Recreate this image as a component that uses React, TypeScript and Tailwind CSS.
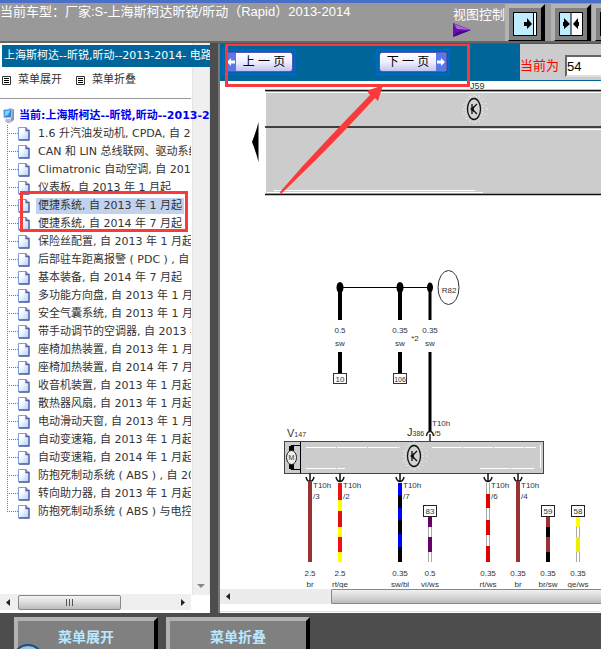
import React from 'react';

const documents = [
  '1.6 升汽油发动机, CPDA, 自 2013 年 1 月起',
  'CAN 和 LIN 总线联网、驱动系统, 自 2013 年 1 月起',
  'Climatronic 自动空调, 自 2013 年 1 月起',
  '仪表板, 自 2013 年 1 月起',
  '便捷系统, 自 2013 年 1 月起',
  '便捷系统, 自 2014 年 7 月起',
  '保险丝配置, 自 2013 年 1 月起',
  '后部驻车距离报警 ( PDC ) , 自 2013 年 1 月起',
  '基本装备, 自 2014 年 7 月起',
  '多功能方向盘, 自 2013 年 1 月起',
  '安全气囊系统, 自 2013 年 1 月起',
  '带手动调节的空调器, 自 2013 年 1 月起',
  '座椅加热装置, 自 2013 年 1 月起',
  '座椅加热装置, 自 2014 年 7 月起',
  '收音机装置, 自 2013 年 1 月起',
  '散热器风扇, 自 2013 年 1 月起',
  '电动滑动天窗, 自 2013 年 1 月起',
  '自动变速箱, 自 2013 年 1 月起',
  '自动变速箱, 自 2014 年 1 月起',
  '防抱死制动系统 ( ABS ) , 自 2013 年 1 月起',
  '转向助力器, 自 2013 年 1 月起',
  '防抱死制动系统 ( ABS ) 与电控稳定程序',
];

const selectedIndex = 4;

type Segment = [color: string, from: number, to: number];

const wires: { x: number; gauge: string; code: string; pin?: string; box?: string; segments: Segment[] }[] = [
  { x: 310, gauge: '2.5', code: 'br', pin: '/3', segments: [['#993333', 481, 562]] },
  {
    x: 340, gauge: '2.5', code: 'rt/ge', pin: '/2',
    segments: [['#ee1111', 483, 500], ['#ffff00', 500, 511], ['#dd1111', 511, 527], ['#ffff00', 527, 537], ['#ee1111', 537, 552], ['#ffff00', 552, 562]],
  },
  {
    x: 400, gauge: '0.35', code: 'sw/bl', pin: '/7',
    segments: [['#0000ff', 483, 495], ['#000000', 495, 508], ['#0000ff', 508, 520], ['#000000', 520, 534], ['#0000ff', 534, 547], ['#000000', 547, 562]],
  },
  {
    x: 430, gauge: '0.5', code: 'vi/ws', box: '83',
    segments: [['#660066', 516, 527], ['#ffffff', 527, 537], ['#660066', 537, 552], ['#ffffff', 552, 562]],
  },
  {
    x: 488, gauge: '0.35', code: 'rt/ws', pin: '/6',
    segments: [['#ffffff', 483, 494], ['#dd0000', 494, 508], ['#ffffff', 508, 520], ['#dd0000', 520, 535], ['#ffffff', 535, 546], ['#dd0000', 546, 562]],
  },
  { x: 518, gauge: '0.35', code: 'br', pin: '/4', segments: [['#993333', 481, 562]] },
  {
    x: 548, gauge: '0.35', code: 'br/sw', box: '59',
    segments: [['#993333', 516, 527], ['#000000', 527, 537], ['#993333', 537, 552], ['#000000', 552, 562]],
  },
  {
    x: 578, gauge: '0.35', code: 'ge/ws', box: '58',
    segments: [['#ffff00', 516, 527], ['#ffffff', 527, 537], ['#eeee00', 537, 552], ['#ffffff', 552, 562]],
  },
];

export default function App() {
  return (
    <div className="flex h-screen flex-col overflow-hidden bg-[#4d4d4d] font-['DejaVu_Sans','Noto_Sans_CJK_SC',sans-serif] text-[11px] text-[#333]">
      <Header />
      <main className="flex min-h-0 flex-1">
        <Sidebar />
        <Viewer />
      </main>
      <Footer />
    </div>
  );
}

function Header() {
  return (
    <header className="flex h-[43px] shrink-0 justify-between border-t-[3px] border-b-2 border-t-[#4a6fc8] border-b-[#666] bg-[#999] font-['Liberation_Sans','Noto_Sans_CJK_SC',sans-serif] text-[13px] leading-4 text-white">
      <h1 className="pt-px whitespace-nowrap">当前车型：厂家:S-上海斯柯达昕锐/昕动（Rapid）2013-2014</h1>
      <div className="flex w-[148px] shrink-0 overflow-hidden">
        <div className="w-[52px] shrink-0 pt-1 whitespace-nowrap">
          视图控制
          <svg width="18" height="15" viewBox="0 0 18 15" aria-hidden="true">
            <path d="M0 0L18 7L0 14Z" fill="#6a0dad" />
            <path d="M1 1L17 7L4 6Z" fill="#a56ad8" />
            <path d="M0 14L18 7L4 9Z" fill="#4b0082" />
          </svg>
        </div>
        <div className="flex shrink-0 items-start gap-px pt-px">
          <div className="flex gap-[6px]">
            <ViewButton label="单窗口">
              <rect x="1" y="1" width="19" height="22" fill="#c0ecff" />
              <rect x="20" y="1" width="3" height="22" fill="#fff" />
              <path d="M20.500 1V23M0.500 0.500H23.500V23.500H0.500Z" fill="none" stroke="#000" />
              <path d="M11 10H14V6L19 12L14 17V14H11Z" />
            </ViewButton>
            <ViewButton label="双窗口">
              <rect x="1" y="1" width="11" height="22" fill="#c0ecff" />
              <rect x="12" y="1" width="11" height="22" fill="#fff" />
              <path d="M12 1V23M0.500 0.500H23.500V23.500H0.500Z" fill="none" stroke="#000" />
              <path d="M4 10H5V6L11 12L5 17V14H4ZM20 10H19V6L14 12L19 17V14H20Z" />
            </ViewButton>
          </div>
          <ViewButton label="全屏">
            <rect width="24" height="24" fill="#000" />
          </ViewButton>
        </div>
      </div>
    </header>
  );
}

function ViewButton({ label, children }: { label: string; children: React.ReactNode }) {
  return (
    <button
      type="button"
      aria-label={label}
      className="size-10 shrink-0 border-4 border-t-[#b3b3b3] border-r-black border-b-black border-l-[#b3b3b3] bg-[#808080] p-1"
    >
      <svg className="block" width="24" height="24" viewBox="0 0 24 24">
        {children}
      </svg>
    </button>
  );
}

function Sidebar() {
  return (
    <aside className="grid w-[210px] shrink-0 grid-rows-[minmax(0,1fr)] bg-white">
      <div className="col-start-1 row-start-1 mb-[18px] ml-auto flex w-[18px] flex-col justify-end border-x border-[#e3e3e3] bg-[#efefef]">
        <svg className="mx-auto mb-[6px]" width="8" height="5" viewBox="0 0 8 5" aria-hidden="true">
          <path d="M0 0H8L4 4Z" fill="#888" />
        </svg>
      </div>
      <div className="col-start-1 row-start-1 flex min-w-0 flex-col overflow-hidden pt-[2px]">
        <h2 className="ml-[2px] h-[22px] shrink-0 overflow-hidden bg-[#006699] pl-[2px] leading-[22px] whitespace-nowrap text-white">
          上海斯柯达--昕锐,昕动--2013-2014- 电路图
        </h2>
        <div className="mr-[19px] flex h-8 shrink-0 items-start gap-[14px] border-b border-[#999] pt-1 pl-[2px]">
          <MenuButton text="菜单展开" />
          <MenuButton text="菜单折叠" />
        </div>
        <a href="#root-node" className="mt-2 flex h-[18px] shrink-0 items-center gap-1 pl-[3px] font-bold whitespace-nowrap text-[#0000ee]">
          <ComputerIcon />
          当前:上海斯柯达--昕锐,昕动--2013-2014
        </a>
        <div className="relative mr-[19px] flex-1">
          <ul className="overflow-hidden">
            {documents.map((title, i) => (
              <li key={title} className="flex h-[18px] items-center pl-[7px]">
                <TreeLine last={i === documents.length - 1} />
                <PageIcon />
                <a
                  href={`#doc-${i}`}
                  className={`ml-[6px] shrink-0 px-[2px] leading-4 whitespace-nowrap ${i === selectedIndex ? 'bg-[#c1d2ee]' : ''}`}
                >
                  {title}
                </a>
              </li>
            ))}
          </ul>
          <div className="pointer-events-none absolute top-[66px] left-5 h-[41px] w-[168px] border-[3px] border-[#fa3a3a]" />
        </div>
        <div className="mr-[19px] mb-[3px] flex h-4 shrink-0 items-center bg-[#efefef] pr-[6px] pl-[6px]">
          <Arrow direction="left" />
          <div className="ml-2 flex h-[15px] w-[103px] items-center justify-center gap-[2px] rounded-[2px] border border-[#888] bg-linear-to-b from-[#f4f4f4] via-[#dcdcdc] to-[#bcbcbc]">
            <i className="h-[7px] w-px bg-[#555]" />
            <i className="h-[7px] w-px bg-[#555]" />
            <i className="h-[7px] w-px bg-[#555]" />
          </div>
          <span className="ml-auto">
            <Arrow direction="right" />
          </span>
        </div>
      </div>
    </aside>
  );
}

function MenuButton({ text }: { text: string }) {
  return (
    <button type="button" className="flex items-center gap-[7px] leading-[18px]">
      <svg width="9" height="9" viewBox="0 0 9 9">
        <path d="M0.500 0.500H8.500V8.500H0.500Z" fill="#fff" stroke="#333" />
        <path d="M2 2.500H7M2 4.500H7M2 6.500H7" stroke="#000" />
      </svg>
      {text}
    </button>
  );
}

function TreeLine({ last }: { last: boolean }) {
  return (
    <svg className="shrink-0" width="11" height="18" viewBox="0 0 11 18" aria-hidden="true">
      <path d={last ? 'M0.500 0V9' : 'M0.500 0V18'} stroke="#777" strokeDasharray="1 1" />
      <path d="M0 8.500H11" stroke="#777" strokeDasharray="1 1" />
    </svg>
  );
}

function PageIcon() {
  return (
    <svg className="shrink-0" width="12" height="14" viewBox="0 0 12 14" aria-hidden="true">
      <defs>
        <linearGradient id="page" x1="0" y1="0" x2="1" y2="1">
          <stop offset="0.3" stopColor="#fff" />
          <stop offset="1" stopColor="#a9cdf8" />
        </linearGradient>
      </defs>
      <path d="M0.500 0.500H8L11 3.500V13H0.500Z" fill="url(#page)" stroke="#7c9fd6" />
      <path d="M8 0.500V3.500H11V13H1" fill="none" stroke="#5560a0" strokeWidth="1.300" />
    </svg>
  );
}

function ComputerIcon() {
  return (
    <svg className="shrink-0" width="12" height="16" viewBox="0 0 12 16" aria-hidden="true">
      <path d="M7 2L11 1V12L8 14Z" fill="#8a93b5" />
      <path d="M0.500 2L9 0.500L8.500 9.500L1 10Z" fill="#2f86e0" stroke="#b8c8e4" />
      <path d="M2 3L7.500 2L5 7L2 8Z" fill="#7fd0ff" />
      <path d="M3 11H7L9 14L5 15.500L2 13Z" fill="#b4b8cc" />
    </svg>
  );
}

function Arrow({ direction }: { direction: 'left' | 'right' }) {
  return (
    <svg className="shrink-0" width="4" height="7" viewBox="0 0 4 7" aria-hidden="true">
      <path d={direction === 'left' ? 'M4 0V7L0 3.500Z' : 'M0 0V7L4 3.500Z'} fill="#222" />
    </svg>
  );
}

function Viewer() {
  return (
    <section className="relative ml-2 flex min-w-0 flex-1 flex-col border-t border-l-2 border-t-[#555] border-l-[#777] bg-white">
      <div className="flex h-[37px] shrink-0 justify-between bg-[#006699]">
        <nav className="flex items-start gap-[80px] pt-[5px] pl-[2px]">
          <PageLink text="上 一 页" direction="prev" />
          <PageLink text="下 一 页" direction="next" />
        </nav>
        <div className="flex h-9 w-[81px] shrink-0 items-center gap-[6px] overflow-hidden bg-[#ccc] pt-2 font-['Liberation_Sans','Noto_Sans_CJK_SC',sans-serif] text-[13px]">
          <label htmlFor="page" className="shrink-0 text-[#f00]">当前为</label>
          <input
            id="page"
            defaultValue="54"
            className="h-[22px] w-12 shrink-0 border-2 border-[#ddd] border-t-[#666] border-l-[#666] bg-white text-black"
          />
        </div>
      </div>
      <div className="min-h-0 flex-1 overflow-hidden">
        <Diagram />
      </div>
      <div className="mb-[7px] flex h-[15px] shrink-0 items-center overflow-hidden bg-[#ececec] pl-[6px]">
        <Arrow direction="left" />
        <div className="ml-[101px] h-[15px] flex-1 rounded-l-[2px] border border-r-0 border-[#888] bg-linear-to-b from-[#f0f0f0] via-[#d8d8d8] to-[#bdbdbd]" />
      </div>
      <div className="h-[2px] shrink-0 border-t border-[#ddd]" />
      {/* red callout over the page buttons */}
      <svg className="pointer-events-none absolute top-0 left-0" width="260" height="155" viewBox="220 43 260 155" aria-hidden="true">
        <rect x="226.500" y="43.500" width="242" height="41" fill="none" stroke="#fa3a3a" strokeWidth="3" />
        <path d="M383 84L378 100L375 97C346 129 312 163 281 193L280 191C309 157 340 125 370 94L367 90Z" fill="#fa3a3a" />
      </svg>
    </section>
  );
}

function PageLink({ text, direction }: { text: string; direction: 'prev' | 'next' }) {
  const badge = (
    <span className="flex w-[10px] items-center justify-center bg-[#5b78e8]">
      <svg width="8" height="8" viewBox="0 0 8 8" aria-hidden="true">
        <path d={direction === 'prev' ? 'M0 4L4 0V2.500H8V5.500H4V8Z' : 'M8 4L4 0V2.500H0V5.500H4V8Z'} fill="#fff" />
      </svg>
    </span>
  );
  return (
    <a href={`#${direction}`} className="block border-2 border-[#0066cc] p-px">
      <span className="flex h-5 w-[68px] overflow-hidden rounded-[3px] border border-[#5a5ab0] bg-linear-to-b from-white via-[#eeeeff] to-[#c4c4f4] font-['Liberation_Sans','Noto_Sans_CJK_SC',sans-serif] text-[12px] text-black">
        {direction === 'prev' && badge}
        <span className="flex-1 text-center leading-[18px] whitespace-nowrap">{text}</span>
        {direction === 'next' && badge}
      </span>
    </a>
  );
}

function Diagram() {
  return (
    <svg
      className="block font-['Liberation_Sans_Narrow','Liberation_Sans',sans-serif]"
      width="700"
      height="507"
      viewBox="220 81 700 507"
      fontSize="8"
      fill="#333"
    >
      {/* upper control unit */}
      <rect x="266" y="91" width="660" height="104" fill="#ccc" />
      <path d="M265 90.500H920M265 127H920M265 194.500H920" stroke="#111" strokeWidth="1.300" />
      <path d="M266 92.500H920M480 129.500H920M267 192.500H483M274 190.500H475" stroke="#fff" />
      <path d="M258.500 122Q256 132 252 142Q256 152 258.500 162Z" fill="#000" />
      <text x="470" y="89" fontSize="9">J59</text>
      <Speckle cx={474} cy={109} />
      <TransistorMark cx={474} cy={109} />

      {/* R82 branch */}
      <path d="M340 287.500H430" stroke="#000" />
      <path d="M340 287V320M340 352V373M400 287V320M400 352V373" stroke="#000" strokeWidth="4" />
      <path d="M430 287V320M430 352V431" stroke="#000" strokeWidth="3" />
      <ellipse cx="340" cy="287.500" rx="3.500" ry="5.500" fill="#000" />
      <ellipse cx="400" cy="287.500" rx="3.500" ry="5.500" fill="#000" />
      <ellipse cx="430" cy="287.500" rx="3" ry="5" fill="#000" />
      <ellipse cx="448.500" cy="287.500" rx="10.500" ry="17" fill="none" stroke="#333" />
      <g textAnchor="middle">
        <text x="449" y="293">R82</text>
        <text x="340" y="333">0.5</text>
        <text x="340" y="346">sw</text>
        <text x="400" y="333">0.35</text>
        <text x="400" y="346">sw</text>
        <text x="430" y="333">0.35</text>
        <text x="430" y="346">sw</text>
        <text x="415" y="341">*2</text>
        <rect x="333.500" y="373.500" width="13" height="10" fill="#fff" stroke="#333" />
        <text x="340" y="382">10</text>
        <rect x="393.500" y="373.500" width="13" height="10" fill="#fff" stroke="#333" />
        <text x="400" y="382" fontSize="7">106</text>
      </g>

      {/* J386 module */}
      <rect x="284.500" y="441.500" width="259" height="32" fill="#ccc" stroke="#444" />
      <path d="M306 447.500H400M432 447.500H536M540.500 445V468M306 468.500H345M480 468.500H534" stroke="#fff" strokeDasharray="30 1" />
      <path d="M300.500 442V473M291 445.500H300M291 469.500H300" stroke="#000" fill="none" />
      <rect x="289" y="446" width="5" height="5" fill="#000" />
      <rect x="289" y="464" width="5" height="5" fill="#000" />
      <ellipse cx="291.500" cy="457.500" rx="5" ry="7" fill="#eee" stroke="#222" />
      <text x="291.500" y="460" fontSize="7" textAnchor="middle">M</text>
      <Speckle cx={414} cy={456} />
      <TransistorMark cx={414} cy={456} />
      <text x="287" y="437"><tspan fontSize="11">V</tspan><tspan fontSize="7">147</tspan></text>
      <text x="407" y="436"><tspan fontSize="11">J</tspan><tspan fontSize="7">386</tspan></text>
      <text x="432" y="426">T10h</text>
      <text x="434" y="436">/5</text>
      <path d="M426.500 436Q427 431.500 430 431.500Q433 431.500 433.500 436M430 434V441" stroke="#222" strokeWidth="1.500" fill="none" />

      {wires.map((wire) => (
        <g key={wire.x}>
          {wire.pin && (
            <>
              <path
                d={`M${wire.x} 473V481M${wire.x - 4} 477Q${wire.x - 3} 481.500 ${wire.x} 481.500Q${wire.x + 3} 481.500 ${wire.x + 4} 477`}
                stroke="#111"
                strokeWidth="1.500"
                fill="none"
              />
              <text x={wire.x + 3} y="488">T10h</text>
              <text x={wire.x + 3} y="499">{wire.pin}</text>
            </>
          )}
          {wire.segments.map(([color, from, to]) => (
            <g key={from}>
              {color === '#ffffff' && <rect x={wire.x - 2} y={from} width="4" height={to - from} fill="#aaa" />}
              <rect
                x={color === '#ffffff' ? wire.x - 1 : wire.x - 2}
                y={from}
                width={color === '#ffffff' ? 2 : 4}
                height={to - from}
                fill={color}
              />
            </g>
          ))}
          {wire.box && (
            <>
              <rect x={wire.x - 6.5} y="505.500" width="13" height="11" fill="#fff" stroke="#222" />
              <text x={wire.x} y="514" textAnchor="middle">{wire.box}</text>
            </>
          )}
          <text x={wire.x} y="576" textAnchor="middle">{wire.gauge}</text>
          <text x={wire.x} y="587" textAnchor="middle">{wire.code}</text>
        </g>
      ))}
    </svg>
  );
}

function Speckle({ cx, cy }: { cx: number; cy: number }) {
  return (
    <g fill="none" stroke="#fff">
      <ellipse cx={cx} cy={cy} rx="9" ry="13" strokeDasharray="1 2" />
      <ellipse cx={cx + 1} cy={cy} rx="12" ry="14" strokeDasharray="1 4" />
    </g>
  );
}

function TransistorMark({ cx, cy }: { cx: number; cy: number }) {
  return (
    <g transform={`translate(${cx} ${cy})`} fill="none" stroke="#111">
      <ellipse rx="6.500" ry="10.500" fill="#d4d4d4" strokeWidth="1.300" />
      <path d="M-2 -5V5M3 -5L-2 0L3 5" strokeWidth="1.300" />
      <path d="M-4 0L0 -3V3Z" fill="#111" stroke="none" />
    </g>
  );
}

function Footer() {
  return (
    <footer className="relative flex h-9 shrink-0 items-start gap-2 overflow-hidden pt-1 pl-[14px]">
      <FooterButton text="菜单展开" />
      <FooterButton text="菜单折叠" />
      <svg className="absolute bottom-0 left-[14px]" width="28" height="5" viewBox="0 0 28 5" aria-hidden="true">
        <circle cx="14" cy="16" r="15" fill="#9fc0dc" stroke="#1f4f78" strokeWidth="2" />
      </svg>
    </footer>
  );
}

function FooterButton({ text }: { text: string }) {
  return (
    <button
      type="button"
      className="h-10 w-36 shrink-0 border-4 border-t-[#b3b3b3] border-r-black border-b-black border-l-[#b3b3b3] bg-[#808080] text-[14px] leading-8 font-bold text-[#b8e8ff]"
    >
      {text}
    </button>
  );
}
